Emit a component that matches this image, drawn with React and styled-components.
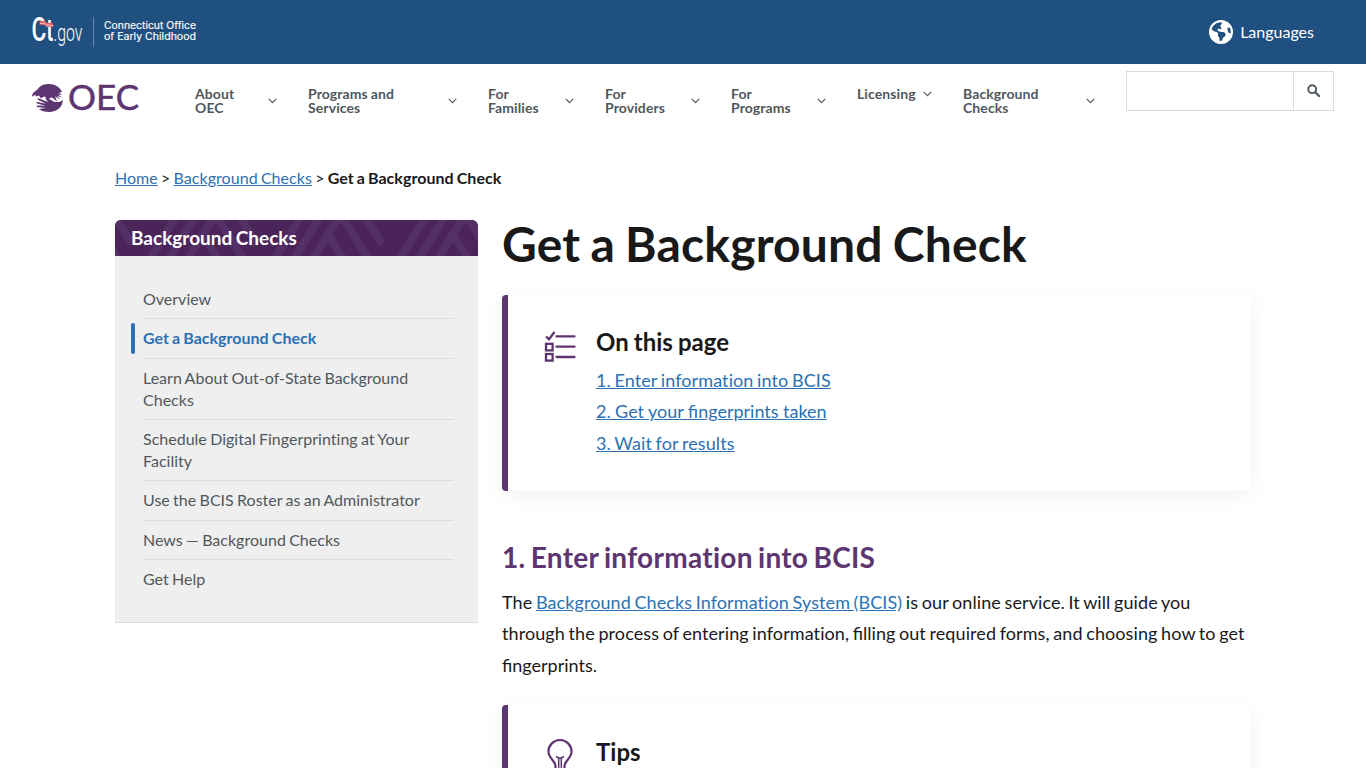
import styled, { createGlobalStyle } from "styled-components";
import { FaEarthAmericas } from "react-icons/fa6";

const navItems = [
  { label: "About OEC", width: 81.5 },
  { label: "Programs and Services", width: 148.5 },
  { label: "For Families", width: 85.5 },
  { label: "For Providers", width: 94.5 },
  { label: "For Programs", width: 94.5 },
  { label: "Licensing", width: 74.5 },
  { label: "Background Checks", width: 131.5 },
];

const sideLinks = [
  "Overview",
  "Get a Background Check",
  "Learn About Out-of-State Background Checks",
  "Schedule Digital Fingerprinting at Your Facility",
  "Use the BCIS Roster as an Administrator",
  "News — Background Checks",
  "Get Help",
];

const pageLinks = [
  "1. Enter information into BCIS",
  "2. Get your fingerprints taken",
  "3. Wait for results",
];

const GovLogo = () => (
  <svg width="170" height="40" viewBox="0 0 170 40" fill="#fff">
    <text
      transform="translate(-.5 28.5) scale(.52 1)"
      fontFamily="Roboto"
      fontSize="33"
      fontWeight="500"
      textLength="98"
      lengthAdjust="spacingAndGlyphs"
    >
      C<tspan fontSize="31">t</tspan>
      <tspan fontSize="23" fontWeight="300">.gov</tspan>
    </text>
    <path d="M7.5 9.5l4-.8 3.5 2 6 .5v4l-6.500-.8-3.500-2-3.500.5z" fill="#e5565a" />
    <path d="M8 11.500l3.500-.5 3.500 2 6 .5" stroke="#fff" strokeWidth=".7" fill="none" />
    <path d="M61.500 5v30" stroke="#6683a3" />
    <g fontFamily="Inter" fontSize="10" fontWeight="400" stroke="#fff" strokeWidth=".15">
      <text x="72" y="17.300" textLength="92" lengthAdjust="spacingAndGlyphs">
        Connecticut Office
      </text>
      <text x="72" y="28.300" textLength="92" lengthAdjust="spacingAndGlyphs">
        of Early Childhood
      </text>
    </g>
  </svg>
);

const OecLogo = () => (
  <svg width="118" height="40" viewBox="0 0 118 40" fill="#5d3570">
    <path d="M0 14C1 9 5 9 7 5.500 9 3 13 2 17 2c6 0 11 3 13 8l-3 1 3 2-4-.5 4 3-5-1.500 3 3.500-5-3 2 5-5-4c-2 0-3 2-5 2l-2-3c-2 0-3 1-4 2l-2-3-3 1-1-2-2 2z" />
    <path d="M31 17c0 8-6 13-14 13-4 0-8-1-10-3l7-1-9-1c-1-.5-.5-1.500.5-1.500l8 .2-8.500-2.200c-1-.5-.5-1.500.5-1.400l8.500 1.600-8-4c-1-.7 0-1.700 1-1.300l9 3.600-2.500-3.500c0-1 1-1.200 2-.5l6 3.500c3 1 6 1 9.500-1.500z" />
    <text
      x="36"
      y="28"
      fontFamily="Lato"
      fontSize="35"
      stroke="#5d3570"
      strokeWidth=".5"
      textLength="71"
      lengthAdjust="spacingAndGlyphs"
    >
      OEC
    </text>
  </svg>
);

const Chevron = () => (
  <svg width="9" height="6" viewBox="0 0 9 6" fill="none" stroke="#50585d">
    <path d="M.7.8l3.800 3.800L8.300.8" strokeWidth="1.100" />
  </svg>
);

const SearchIcon = () => (
  <svg width="14" height="14" viewBox="0 0 14 14" fill="none" stroke="#50585d" strokeWidth="1.900">
    <circle cx="5.200" cy="5.200" r="3.900" />
    <path d="M8 8l4.800 4.800" strokeWidth="2.200" />
  </svg>
);

const ListIcon = () => (
  <svg width="32" height="32" viewBox="0 0 32 32" fill="none" stroke="#5d3570" strokeWidth="2.300">
    <path d="M12.500 5.300h18M12.500 15.700h18M12.500 26h18" strokeLinecap="round" />
    <path d="M2 5.500l3 2.700L10.500 1" />
    <rect x="2" y="12.800" width="6.600" height="6.600" />
    <rect x="2" y="23" width="6.600" height="6.600" />
  </svg>
);

const BulbIcon = () => (
  <svg width="32" height="42" viewBox="0 0 32 42" fill="none" stroke="#5d3570" strokeWidth="2.200">
    <path d="M11.500 34v-4c0-5-7-7.500-7-14.500a11.500 11.500 0 0 1 23 0c0 7-7 9.500-7 14.500v4z" />
    <path d="M12 20.500l2.500 1.500h3l2.500-1.500M14.700 22v12M17.300 22v12" strokeWidth="1.500" />
  </svg>
);

const Pattern = () => (
  <PatternSvg width="363" height="36" viewBox="0 0 363 36" fill="none" stroke="#553066" strokeWidth="8">
    {[-18, 107, 232, 357].map((x) => (
      <g key={x}>
        <path d={`M${x - 73} 40l30-48M${x - 54} 40l30-48M${x - 35} 40l30-48`} />
        <path d={`M${x - 19} 15l16 25M${x - 8} -8l30 48M${x + 15} -8l20 32`} />
      </g>
    ))}
  </PatternSvg>
);

const App = () => {
  return (
    <Page>
      <GlobalStyle />
      <TopBar>
        <GovLogo />
        <Languages>
          <FaEarthAmericas size={24} />
          <span>Languages</span>
        </Languages>
      </TopBar>
      <Header>
        <Brand>
          <OecLogo />
        </Brand>
        <Nav>
          {navItems.map(({ label, width }) => (
            <NavItem key={label} $width={width}>
              <span>{label}</span>
              <Chevron />
            </NavItem>
          ))}
        </Nav>
        <Search>
          <input aria-label="Search" />
          <button aria-label="Submit">
            <SearchIcon />
          </button>
        </Search>
      </Header>
      <Container>
        <Breadcrumbs>
          <a href="#home">Home</a> &gt; <a href="#checks">Background Checks</a> &gt;{" "}
          <strong>Get a Background Check</strong>
        </Breadcrumbs>
        <Columns>
          <Sidebar>
            <SidebarTitle>
              <Pattern />
              <span>Background Checks</span>
            </SidebarTitle>
            <SideList>
              {sideLinks.map((link, index) => (
                <SideItem key={link} $active={index === 1}>
                  {link}
                </SideItem>
              ))}
            </SideList>
          </Sidebar>
          <Main>
            <h1>Get a Background Check</h1>
            <Callout>
              <IconSlot $top={5}>
                <ListIcon />
              </IconSlot>
              <div>
                <h3>On this page</h3>
                {pageLinks.map((link) => (
                  <PageLink key={link} $ligatures={link.includes("fi")}>
                    <a href="#section">{link}</a>
                  </PageLink>
                ))}
              </div>
            </Callout>
            <h2>1. Enter information into BCIS</h2>
            <Text>
              The <a href="#bcis">Background Checks Information System (BCIS)</a> is our online
              service. It will guide you through the process of entering information,{" "}
              <Ligature>filling</Ligature> out required forms, and choosing how to get{" "}
              <Ligature>fingerprints.</Ligature>
            </Text>
            <Callout>
              <IconSlot $top={0}>
                <BulbIcon />
              </IconSlot>
              <div>
                <h3>Tips</h3>
              </div>
            </Callout>
          </Main>
        </Columns>
      </Container>
    </Page>
  );
};

const GlobalStyle = createGlobalStyle`
  * {
    box-sizing: border-box;
  }
  body {
    margin: 0;
    background: #fff;
    color: #19191a;
    font-family: Lato, sans-serif;
    font-size: 16px;
    font-variant-ligatures: none;
    overflow: hidden;
  }
  h1, h2, h3, p, ul {
    margin: 0;
    padding: 0;
  }
  a {
    color: #2c71b3;
    text-decoration: underline;
  }
`;

const Page = styled.div`
  height: 768px;
  overflow: hidden;
`;

const TopBar = styled.header`
  display: flex;
  align-items: center;
  justify-content: space-between;
  height: 64px;
  padding: 0 52px 0 32px;
  background: #20507f;
`;

const Languages = styled.div`
  display: flex;
  align-items: center;
  gap: 7px;
  color: #fff;
  span {
    padding-bottom: 2px;
  }
`;

const Header = styled.div`
  display: flex;
  align-items: flex-start;
  height: 96px;
  padding: 0 32px;
`;

const Brand = styled.div`
  width: 163px;
  padding-top: 18px;
  svg {
    display: block;
  }
`;

const Nav = styled.nav`
  display: flex;
  gap: 31.5px;
  padding-top: 23px;
`;

const NavItem = styled.div`
  display: flex;
  align-items: center;
  justify-content: space-between;
  align-self: flex-start;
  width: ${(props) => props.$width}px;
  color: #50585d;
  font-size: 14px;
  font-weight: 700;
  line-height: 14px;
  letter-spacing: 0.1px;
  word-spacing: -0.6px;
  span {
    flex: 0 1 ${(props) => props.$width - 14}px;
    max-width: 90px;
  }
  svg {
    flex-shrink: 0;
  }
`;

const Search = styled.form`
  display: flex;
  width: 208px;
  height: 40px;
  margin: 7px 0 0 auto;
  border: 1px solid #dadce0;
  input {
    flex: 1;
    min-width: 0;
    border: 0;
  }
  button {
    display: flex;
    align-items: center;
    justify-content: center;
    width: 40px;
    padding: 0 0 1px;
    border: 0;
    border-left: 1px solid #dadce0;
    background: #fff;
  }
`;

const Container = styled.div`
  width: 1136px;
  margin: 0 auto;
`;

const Breadcrumbs = styled.div`
  height: 60px;
  padding-top: 6px;
  line-height: 24px;
  letter-spacing: 0.04px;
  word-spacing: -0.9px;
`;

const Columns = styled.div`
  display: flex;
  align-items: flex-start;
  gap: 24px;
`;

const Sidebar = styled.aside`
  width: 363px;
  height: 403px;
  border-radius: 6px 6px 0 0;
  border-bottom: 1px solid #dcdcdc;
  background: #efefef;
  overflow: hidden;
`;

const SidebarTitle = styled.div`
  position: relative;
  height: 36px;
  padding-left: 16px;
  background: #4b2459;
  color: #fff;
  font-size: 19px;
  font-weight: 700;
  line-height: 36px;
  word-spacing: -1.2px;
  span {
    position: relative;
  }
`;

const PatternSvg = styled.svg`
  position: absolute;
  top: 0;
  left: 0;
`;

const SideList = styled.ul`
  padding: 24px 24px 0 16px;
  list-style: none;
`;

const SideItem = styled.li`
  position: relative;
  margin-left: 12px;
  padding: 8px 0 8.36px;
  border-bottom: 1px solid #dcdcdc;
  color: ${(props) => (props.$active ? "#2c71b3" : "#50585d")};
  font-weight: ${(props) => (props.$active ? 700 : 400)};
  line-height: 22px;
  word-spacing: -0.8px;
  letter-spacing: 0.01px;
  &:last-child {
    border-bottom: 0;
  }
  &::before {
    content: "";
    display: ${(props) => (props.$active ? "block" : "none")};
    position: absolute;
    left: -12px;
    top: 4px;
    width: 4px;
    height: 31px;
    border-radius: 2px;
    background: #2c71b3;
  }
`;

const Main = styled.main`
  width: 749px;
  h1 {
    height: 75px;
    font-size: 48px;
    line-height: 48px;
    letter-spacing: 0.17px;
    word-spacing: -1.7px;
  }
  h2 {
    margin-top: 49px;
    color: #5d3570;
    font-size: 28px;
    line-height: 34px;
    letter-spacing: 0.28px;
    word-spacing: -1.8px;
  }
`;

const Callout = styled.section`
  display: flex;
  gap: 20px;
  height: 196px;
  padding: 31px 32px 0 36px;
  border-left: 6px solid #5d3570;
  border-radius: 4px;
  background: #fff;
  box-shadow: 0 4px 20px rgba(0, 0, 0, 0.06);
  h3 {
    margin-bottom: 7.6px;
    font-size: 24px;
    line-height: 31px;
    word-spacing: -0.8px;
  }
`;

const IconSlot = styled.div`
  width: 32px;
  padding-top: ${(props) => props.$top}px;
  svg {
    display: block;
  }
`;

const PageLink = styled.p`
  font-size: 18px;
  font-variant-ligatures: ${(props) => (props.$ligatures ? "normal" : "none")};
  line-height: 31.5px;
  letter-spacing: ${(props) => (props.$ligatures ? 0 : "0.1px")};
  word-spacing: ${(props) => (props.$ligatures ? "-0.2px" : "-1.1px")};
`;

const Text = styled.p`
  && {
    margin: 12.5px 0 23.5px;
  }
  font-size: 18px;
  line-height: 31.5px;
  letter-spacing: 0.09px;
  word-spacing: -1.1px;
`;

const Ligature = styled.span`
  font-variant-ligatures: normal;
  letter-spacing: 0;
`;

export default App;
